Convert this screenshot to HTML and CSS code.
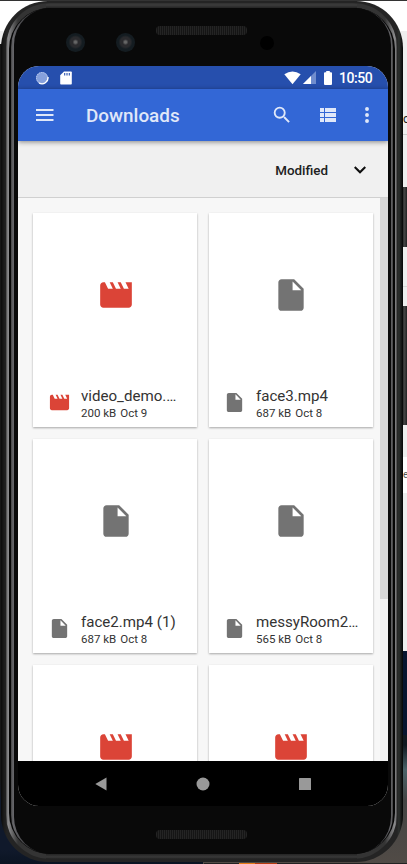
FILE: index.html
```
<!DOCTYPE html>
<html lang="en">
<head>
<meta charset="utf-8">
<title>Downloads</title>
<link rel="stylesheet" href="styles.css">
</head>
<body>
<svg class="defs" width="0" height="0">
  <symbol id="movie" viewBox="0 0 24 24"><path d="M18 4l2 4h-3l-2-4h-2l2 4h-3l-2-4H8l2 4H7L5 4H4c-1.100 0-1.990.9-1.990 2L2 18c0 1.100.9 2 2 2h16c1.100 0 2-.9 2-2V4h-4z"/></symbol>
  <symbol id="file" viewBox="0 0 24 24"><path d="M6 2c-1.100 0-1.990.9-1.990 2L4 20c0 1.100.89 2 1.990 2H18c1.100 0 2-.9 2-2V8l-6-6H6zm7 7V3.500L18.500 9H13z"/></symbol>
</svg>
<div class="desktop">
  <span class="peek peek-one">o</span>
  <span class="peek peek-two">e</span>
  <i class="key power"></i><i class="key volume"></i>
  <div class="shell"><div class="metal"><div class="gap"><div class="rim"><div class="face">
    <div class="forehead">
      <i class="lens"></i><i class="lens"></i><i class="speaker"></i><i class="sensor"></i>
    </div>
    <main class="screen">
      <div class="status">
        <svg class="sync" width="14" height="14" viewBox="0 0 14 14"><circle cx="7" cy="7" r="6" fill="#86a0dc"/><circle cx="7" cy="7" r="5.500" fill="none" stroke="#c9d6f4" stroke-dasharray="1 1"/><path d="M13 6a6 6 0 0 1-9 6" fill="none" stroke="#fff" stroke-width="1.300"/></svg>
        <svg class="sd" width="12" height="14" viewBox="0 0 12 14"><path fill="#fff" d="M4 .5h7q.8 0 .8.8v11.400q0 .8-.8.8H1q-.8 0-.8-.8V4.300z"/><path stroke="#264fad" stroke-width="1.100" d="M4.700 2v2.500M7 2v2.500M9.300 2v2.500"/></svg>
        <span class="spacer"></span>
        <svg class="wifi" width="17" height="14" viewBox="0 0 17 14"><path fill="#fff" d="M.3 3.300Q8.500-2.500 16.700 3.300L8.500 13.300z"/></svg>
        <svg class="cell" width="13" height="13" viewBox="0 0 13 13"><path fill="#708dce" d="M13 0v13H0z"/><path fill="#fff" d="M8 5v8H0z"/></svg>
        <svg class="battery" width="8" height="14" viewBox="0 0 8 14"><path fill="#fff" d="M2.200 0h3.600v1.300H7q1 0 1 1V13q0 1-1 1H1q-1 0-1-1V2.300q0-1 1-1h1.200z"/></svg>
        <time>10:50</time>
      </div>
      <header class="appbar">
        <svg class="menu" width="18" height="12" viewBox="0 0 18 12"><path stroke="#e0e8f9" stroke-width="1.800" d="M0 1h17.500M0 6h17.500M0 11h17.500"/></svg>
        <h1>Downloads</h1>
        <svg class="search" width="22" height="22" viewBox="0 0 24 24"><path fill="#e0e8f9" d="M15.500 14h-.79l-.28-.27A6.470 6.470 0 0 0 16 9.500 6.500 6.500 0 1 0 9.500 16c1.610 0 3.090-.59 4.230-1.570l.27.280v.79l5 4.990L20.490 19l-4.990-5zm-6 0C7.010 14 5 11.990 5 9.500S7.010 5 9.500 5 14 7.010 14 9.500 11.990 14 9.500 14z"/></svg>
        <svg class="list" width="16" height="14" viewBox="0 0 16 14"><path fill="#e0e8f9" d="M0 0h4v4H0zM5 0h11v4H5zM0 5h4v4H0zM5 5h11v4H5zM0 10h4v4H0zM5 10h11v4H5z"/></svg>
        <svg class="more" width="4" height="16" viewBox="0 0 4 16"><g fill="#e0e8f9"><circle cx="2" cy="2" r="1.950"/><circle cx="2" cy="8" r="1.950"/><circle cx="2" cy="14" r="1.950"/></g></svg>
      </header>
      <div class="sort">
        <span>Modified</span>
        <svg width="12" height="8" viewBox="0 0 12 8"><path fill="none" stroke="#111" stroke-width="2.200" d="M.7 1L6 6.300 11.300 1"/></svg>
      </div>
      <section class="files">
        <div class="grid">
          <article class="card"><div class="thumb red"><svg><use href="#movie"/></svg></div><div class="info red"><svg><use href="#movie"/></svg><div class="words"><h2>video_demo.…</h2><p>200 kB<b>Oct 9</b></p></div></div></article>
          <article class="card"><div class="thumb"><svg><use href="#file"/></svg></div><div class="info"><svg><use href="#file"/></svg><div class="words"><h2>face3.mp4</h2><p>687 kB<b>Oct 8</b></p></div></div></article>
          <article class="card"><div class="thumb"><svg><use href="#file"/></svg></div><div class="info"><svg><use href="#file"/></svg><div class="words"><h2>face2.mp4 (1)</h2><p>687 kB<b>Oct 8</b></p></div></div></article>
          <article class="card"><div class="thumb"><svg><use href="#file"/></svg></div><div class="info"><svg><use href="#file"/></svg><div class="words"><h2>messyRoom2…</h2><p>565 kB<b>Oct 8</b></p></div></div></article>
          <article class="card"><div class="thumb red"><svg><use href="#movie"/></svg></div></article>
          <article class="card"><div class="thumb red"><svg><use href="#movie"/></svg></div></article>
        </div>
        <div class="track"><i></i></div>
      </section>
      <nav class="nav">
        <svg width="12" height="14" viewBox="0 0 12 14"><path fill="#999" d="M11.500.5v13L.3 7z"/></svg>
        <svg width="14" height="14" viewBox="0 0 14 14"><circle cx="7" cy="7" r="6.500" fill="#999"/></svg>
        <svg width="12" height="12" viewBox="0 0 12 12"><rect width="12" height="12" rx=".6" fill="#999"/></svg>
      </nav>
    </main>
    <div class="chin"><i class="speaker"></i></div>
  </div></div></div></div></div>
</div>
</body>
</html>
```
FILE: styles.css
```
* { box-sizing: border-box; }
body { margin: 0; font-family: Roboto, "Liberation Sans", sans-serif; }
svg { display: block; flex: none; }
.defs { position: absolute; }
.desktop {
  position: relative; width: 407px; height: 864px; overflow: hidden; padding: 1px 4px 2px 1px;
  background:
    linear-gradient(90deg, #222 0 35px, #e77b16 35px 51px, #b83b10 51px 73px, #222 73px) 204px 863px / 203px 1px no-repeat,
    linear-gradient(#333, #333) 0 0 / 100% 1px no-repeat,
    linear-gradient(#fff 0 31px, #eee 31px 44px, #161616 44px 780px, #10192b 800px 850px, #0b1422) 0 0 / 203px 100% no-repeat,
    linear-gradient(#fff 0 31px, #eee 31px 134px, #ccc 134px 135px, #eee 135px 286px, #d8d8d8 286px 287px, #eee 287px 457px, #fff 457px 493px, #eee 493px 651px, #07142f 651px 735px, #101820 735px 745px, #4b6268 770px, #444 800px, #514b46 864px) 203px 0 / 204px 100% no-repeat;
}
.peek { position: absolute; left: 403px; color: #222; font-size: 12px; line-height: 14px; }
.peek-one { top: 112px; }
.peek-two { top: 468px; left: 403px; color: #555; font-size: 10px; }
.key { position: absolute; right: 0; width: 6px; background: linear-gradient(90deg, #111, #444 60%, #222); }
.power { top: 187px; height: 60px; }
.volume { top: 306px; height: 119px; }
.shell {
  position: relative; height: 861px; padding: 2px 6px 3px 5px; border-radius: 47px;
  background: linear-gradient(90deg, #0a0a0a, #1c1c1c 3px, #242424 6px, #242424 396px, #2c302e 398px, #050505);
}
.metal {
  height: 100%; padding: 5px 2px 5px 3px; border-radius: 44px;
  background:
    linear-gradient(#303030, #3c3c3c 2px, #242424 5px) 40px 0 / 311px 5px no-repeat,
    linear-gradient(#242424, #393939 3px, #222 5px) 40px 100% / 311px 5px no-repeat,
    linear-gradient(90deg, #444, #8d8d8f 2px, #343434 12px, #343434 379px, #8d8d8f 389px, #444);
}
.gap { height: 100%; padding: 0 2px; border-radius: 41px; background: #050505; }
.rim { height: 100%; padding: 0 3px; border-radius: 39px; background: linear-gradient(90deg, #444, #66666a 2px, #0a0a0a 32px, #0a0a0a 350px, #66666a 380px, #444); }
.face { height: 100%; padding: 0 0 0 4px; border-radius: 37px; background: #090909; margin-right: -1px; }
.forehead { height: 58px; display: flex; align-items: flex-start; padding: 25px 0 0 48px; }
.lens { width: 19px; height: 19px; margin-right: 31px; border-radius: 50%; background: radial-gradient(circle at 50% 48%, #666 0 1px, #2a2a2d 3px 5px, #141c21 7px 9px); }
.lens + .lens { margin-right: 21px; }
.speaker { width: 91px; height: 9px; border-radius: 4px; background: repeating-linear-gradient(90deg, #242424 0 1px, #151515 1px 2px); }
.forehead .speaker { margin-top: -7px; }
.sensor { width: 14px; height: 14px; margin: 3px 0 0 13px; border-radius: 50%; background: #000; }
.screen { width: 370px; height: 740px; border-radius: 21px; overflow: hidden; background: #f7f7f7; display: flex; flex-direction: column; }
.status { flex: none; height: 23px; background: #264fad; display: flex; align-items: center; padding: 0 15px 0 17px; color: #fff; }
.sd { margin-left: 11px; }
.spacer { flex: 1; }
.cell { margin-left: 2px; }
.battery { margin-left: 8px; margin-right: 7px; }
.status time { font-size: 14px; font-weight: 500; line-height: 23px; width: 34px; padding-top: 1px; white-space: nowrap; letter-spacing: -.45px; }
.appbar { position: relative; flex: none; height: 52px; background: #3367d6; display: flex; align-items: center; padding: 0 19px 0 18px; box-shadow: 0 1px 5px rgba(0,0,0,.45); }
.appbar h1 { flex: 1; margin: 2px 0 0 32px; color: #e0e8f9; font-size: 18.900px; font-weight: 500; line-height: 24px; }
.list { margin-left: 27px; }
.more { margin-left: 29px; }
.sort { flex: none; height: 57px; background: #f0f0f0; border-bottom: 1px solid #d0d0d0; display: flex; justify-content: flex-end; align-items: center; gap: 26px; padding-right: 22px; color: #212121; font-size: 13.400px; font-weight: 500; }
.sort span { padding-top: 2px; }
.sort svg { margin-top: 1px; }
.files { flex: 1; min-height: 0; display: flex; overflow: hidden; }
.grid { flex: none; display: grid; grid-template-columns: 164px 164px; grid-auto-rows: 214px; gap: 12px; align-content: start; padding: 15px 7px 0 15px; }
.card { background: #fff; box-shadow: 0 1px 2px rgba(0,0,0,.32); color: #737373; }
.red { color: #db4437; }
.thumb { height: 164px; display: grid; place-items: center; fill: currentColor; }
.thumb svg { width: 38px; height: 38px; }
.card:nth-child(odd) .thumb { padding-left: 1px; }
.card:nth-child(odd) .info { padding-left: 15px; }
.card:nth-child(odd) .words { margin-left: 10px; }
.info { height: 50px; display: flex; align-items: center; padding: 0 8px 0 14px; fill: currentColor; }
.info svg { width: 23px; height: 23px; }
.words { min-width: 0; margin: 2px 0 0 10px; color: #333; }
.words h2 { margin: 0; font-size: 15.100px; font-weight: 400; line-height: 20px; white-space: nowrap; }
.words p { margin: 0; font-size: 11.500px; line-height: 15px; white-space: nowrap; }
.words b { font-weight: 400; margin-left: 4px; }
.track { flex: none; width: 8px; background: #f1f1f1; }
.track i { display: block; height: 401px; background: #d6d6d6; }
.nav { flex: none; height: 45px; background: #000; display: flex; align-items: center; justify-content: space-between; padding: 0 77px; }
.chin { height: 48px; padding: 24px 0 0 138px; }
.chin .speaker { display: block; }
```
